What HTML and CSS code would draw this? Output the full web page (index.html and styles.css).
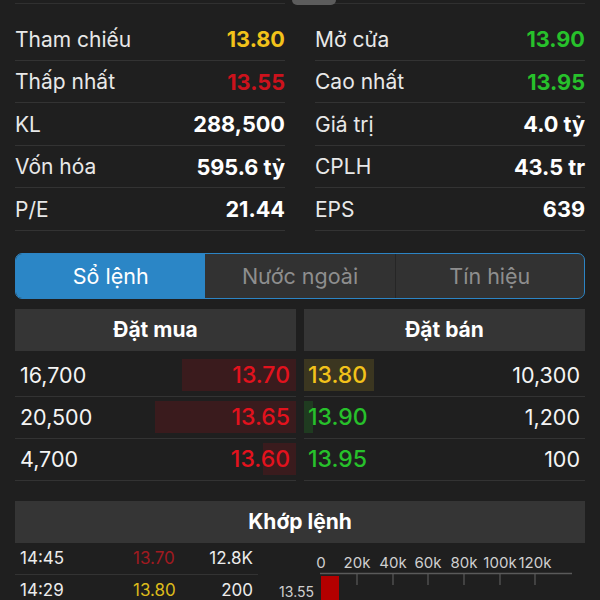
FILE: index.html
```html
<!DOCTYPE html>
<html lang="vi">
<head>
<meta charset="utf-8">
<link rel="stylesheet" href="styles.css">
</head>
<body>
<div class="page">
  <div class="handle"></div>

  <section class="info">
    <div class="info-col">
      <div class="info-row"><span class="lbl">Tham chiếu</span><span class="val ref">13.80</span></div>
      <div class="info-row"><span class="lbl">Thấp nhất</span><span class="val down">13.55</span></div>
      <div class="info-row"><span class="lbl">KL</span><span class="val">288,500</span></div>
      <div class="info-row"><span class="lbl">Vốn hóa</span><span class="val">595.6 tỷ</span></div>
      <div class="info-row"><span class="lbl">P/E</span><span class="val">21.44</span></div>
    </div>
    <div class="info-col">
      <div class="info-row"><span class="lbl">Mở cửa</span><span class="val up">13.90</span></div>
      <div class="info-row"><span class="lbl">Cao nhất</span><span class="val up">13.95</span></div>
      <div class="info-row"><span class="lbl">Giá trị</span><span class="val">4.0 tỷ</span></div>
      <div class="info-row"><span class="lbl">CPLH</span><span class="val">43.5 tr</span></div>
      <div class="info-row"><span class="lbl">EPS</span><span class="val">639</span></div>
    </div>
  </section>

  <nav class="tabs">
    <div class="tab active">Sổ lệnh</div>
    <div class="tab">Nước ngoài</div>
    <div class="tab">Tín hiệu</div>
  </nav>

  <section class="book">
    <div class="book-col">
      <div class="head">Đặt mua</div>
      <div class="book-rows">
        <div class="brow"><span class="bar bar-buy" style="width:114px"></span><span class="vol">16,700</span><span class="price down2">13.70</span></div>
        <div class="brow"><span class="bar bar-buy" style="width:141px"></span><span class="vol">20,500</span><span class="price down2">13.65</span></div>
        <div class="brow"><span class="bar bar-buy" style="width:33px"></span><span class="vol">4,700</span><span class="price down2">13.60</span></div>
      </div>
    </div>
    <div class="book-col">
      <div class="head">Đặt bán</div>
      <div class="book-rows">
        <div class="brow sell"><span class="bar bar-ref" style="width:70px"></span><span class="price ref">13.80</span><span class="vol">10,300</span></div>
        <div class="brow sell"><span class="bar bar-up" style="width:9px"></span><span class="price up">13.90</span><span class="vol">1,200</span></div>
        <div class="brow sell"><span class="price up">13.95</span><span class="vol">100</span></div>
      </div>
    </div>
  </section>

  <section class="match">
    <div class="head">Khớp lệnh</div>
    <div class="match-body">
      <div class="trades">
        <div class="trow"><span class="t-time">14:45</span><span class="t-price dim-down">13.70</span><span class="t-vol">12.8K</span></div>
        <div class="trow"><span class="t-time">14:29</span><span class="t-price dim-ref">13.80</span><span class="t-vol">200</span></div>
      </div>
      <svg class="chart" width="320" height="57" viewBox="0 0 320 57">
        <g class="ticks-lbl">
          <text x="56" y="25" text-anchor="middle">0</text>
          <text x="92" y="25" text-anchor="middle">20k</text>
          <text x="128" y="25" text-anchor="middle">40k</text>
          <text x="163" y="25" text-anchor="middle">60k</text>
          <text x="199" y="25" text-anchor="middle">80k</text>
          <text x="235" y="25" text-anchor="middle">100k</text>
          <text x="270" y="25" text-anchor="middle">120k</text>
        </g>
        <line x1="55" y1="30.5" x2="307" y2="30.5" stroke="#5a5a5a" stroke-width="1.5"/>
        <g stroke="#5a5a5a" stroke-width="1.2">
          <line x1="92" y1="31" x2="92" y2="42"/>
          <line x1="128" y1="31" x2="128" y2="42"/>
          <line x1="163" y1="31" x2="163" y2="42"/>
          <line x1="199" y1="31" x2="199" y2="42"/>
          <line x1="235" y1="31" x2="235" y2="42"/>
          <line x1="270" y1="31" x2="270" y2="42"/>
        </g>
        <text class="row-lbl" x="49" y="54" text-anchor="end">13.55</text>
        <rect x="56" y="33" width="18" height="30" fill="#b30000"/>
      </svg>
    </div>
  </section>
</div>
</body>
</html>
```
FILE: styles.css
```css
* { box-sizing: border-box; }
html, body {
  margin: 0;
  background: #1f1f1f;
  color: #ececec;
  font-family: Inter, "Noto Sans", "Liberation Sans", sans-serif;
}
.page {
  position: relative;
  width: 600px;
  height: 600px;
  overflow: hidden;
  padding: 3px 15px 0;
}
.handle {
  position: absolute;
  top: -1px;
  left: 292px;
  width: 44px;
  height: 6px;
  border-radius: 0 0 5px 5px;
  background: #5c5c5c;
}

/* info grid */
.info {
  display: grid;
  grid-template-columns: 270px 270px;
  column-gap: 30px;
}
.info-col {
  border-top: 1px solid #303030;
  padding-top: 14px;
}
.info-row {
  height: 42.5px;
  display: flex;
  align-items: center;
  justify-content: space-between;
  border-bottom: 1px solid #333;
  font-size: 21px;
  padding-top: 1px;
}
.lbl { color: #e8e8e8; }
.val { font-weight: 700; color: #fff; font-size: 21.7px; }
.ref { color: #f2c21a; }
.down { color: #cc121c; }
.up { color: #27c12b; }
.down2 { color: #e3121d; }

/* tabs */
.tabs {
  margin-top: 22px;
  height: 46px;
  display: grid;
  grid-template-columns: 1fr 1fr 1fr;
  border: 1.5px solid #2c84c4;
  border-radius: 7px;
  overflow: hidden;
  background: #323232;
}
.tab {
  display: flex;
  align-items: center;
  justify-content: center;
  font-size: 21.5px;
  color: #8e8e8e;
}
.tab + .tab { border-left: 1px solid #262626; }
.tab.active {
  background: #2b86c6;
  color: #fff;
}
.tab.active + .tab { border-left: none; }

/* order book */
.book {
  margin-top: 10px;
  display: grid;
  grid-template-columns: 281px 281px;
  column-gap: 8px;
}
.head {
  height: 42px;
  background: #353535;
  display: flex;
  align-items: center;
  justify-content: center;
  font-size: 21px;
  font-weight: 700;
  color: #fff;
}
.book-rows { padding-top: 4px; }
.brow {
  position: relative;
  height: 42px;
  display: flex;
  align-items: center;
  justify-content: space-between;
  padding: 0 6px 0 5px;
  border-bottom: 1px solid #333;
  font-size: 21.5px;
}
.brow.sell { padding: 0 5px 0 4px; }
.bar {
  position: absolute;
  top: 4px;
  bottom: 5px;
  right: 0;
}
.brow.sell .bar { right: auto; left: 0; }
.bar-buy { background: #3a1b1d; }
.bar-ref { background: #3b3620; }
.bar-up { background: #1f3b20; }
.vol, .price { position: relative; }
.price { font-size: 23px; font-weight: 500; }
.vol { color: #f4f4f4; }

/* matching */
.match { margin-top: 20px; }
.match-body {
  display: flex;
  align-items: flex-start;
}
.trades { width: 243px; flex: none; }
.trow {
  height: 32px;
  display: grid;
  grid-template-columns: 113px 60px 60px;
  align-items: center;
  padding-left: 5px;
  border-bottom: 1px solid #333;
  font-size: 17px;
  color: #ececec;
}
.t-vol { text-align: right; }
.dim-down { color: #a01a20; }
.dim-ref { color: #dcbb1b; }
.chart { display: block; flex: none; margin-left: 7px; }
.chart text {
  font-family: Inter, "Noto Sans", sans-serif;
  font-size: 15px;
  fill: #d0d0d0;
}
.chart .row-lbl { font-size: 14px; }
```
